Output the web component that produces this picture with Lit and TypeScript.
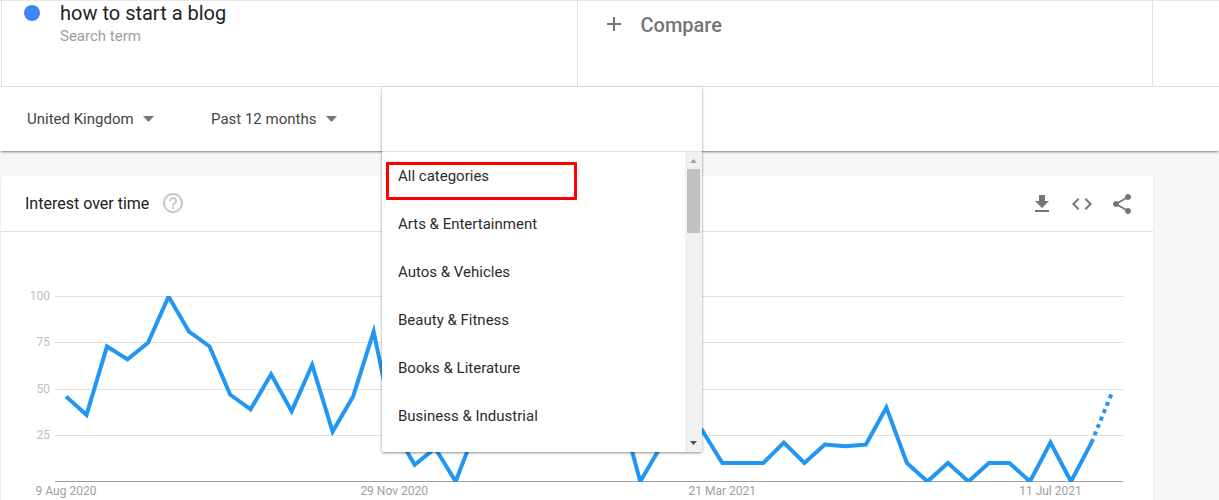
import { LitElement, html, svg, css } from "lit";
import { customElement, property } from "lit/decorators.js";

const INTEREST = [
  46, 36, 73, 66, 75, 100, 81, 73, 47, 39, 58, 38, 63, 27, 46, 81, 28, 9, 18, 0,
  29, 35, 22, 40, 30, 18, 34, 41, 0, 19, 34, 28, 10, 10, 10, 21, 10, 20, 19, 20,
  40, 10, 0, 10, 0, 10, 10, 0, 21, 0, 21, 48,
];

const WEEK_LABELS = [
  { week: 0, text: "9 Aug 2020" },
  { week: 16, text: "29 Nov 2020" },
  { week: 32, text: "21 Mar 2021" },
  { week: 48, text: "11 Jul 2021" },
];

const CATEGORIES = [
  "All categories",
  "Arts & Entertainment",
  "Autos & Vehicles",
  "Beauty & Fitness",
  "Books & Literature",
  "Business & Industrial",
];

const PLOT_WIDTH = 1068;
const PLOT_HEIGHT = 186;
const weekX = (week: number) => 11 + (week * 1046) / 51;
const valueY = (value: number) => PLOT_HEIGHT - 0.5 - value * 1.85;
const point = (week: number) => `${weekX(week)},${valueY(INTEREST[week])}`;

@customElement("trend-chart")
class TrendChart extends LitElement {
  static styles = css`
    :host {
      display: grid;
      grid-template-columns: 49px minmax(0, 1fr);
      column-gap: 5px;
      padding: 56px 30px 0 0;
    }
    .ticks {
      display: flex;
      flex-direction: column;
      justify-content: space-between;
      height: 155px;
      text-align: right;
      font-size: 12px;
      line-height: 16px;
      color: #bdbdbd;
    }
    .plot {
      padding-top: 8px;
    }
    .lines {
      display: block;
      width: 100%;
      height: 186px;
      overflow: hidden;
    }
    .grid {
      stroke: #e0e0e0;
      stroke-width: 1;
    }
    .base {
      stroke: #9e9e9e;
      stroke-width: 1;
    }
    .series {
      fill: none;
      stroke: #2196f3;
      stroke-width: 4;
    }
    .partial {
      stroke-dasharray: 4 4;
    }
    .grid,
    .base,
    .series {
      vector-effect: non-scaling-stroke;
    }
    .weeks {
      display: block;
      width: 100%;
      height: 18px;
      overflow: visible;
      font-size: 12px;
      fill: #9e9e9e;
    }
  `;

  render() {
    const last = INTEREST.length - 1;
    const complete = INTEREST.slice(0, last).map((_, week) => point(week)).join(" ");
    return html`
      <div class="ticks">
        <span>100</span><span>75</span><span>50</span><span>25</span>
      </div>
      <div class="plot">
        <svg class="lines" viewBox="0 0 ${PLOT_WIDTH} ${PLOT_HEIGHT}" preserveAspectRatio="none" role="img" aria-label="Interest over time">
          ${[0.5, 46.5, 93.5, 139.5].map(
            (y) => svg`<line class="grid" x1="0" x2=${PLOT_WIDTH} y1=${y} y2=${y}></line>`
          )}
          <line class="base" x1="0" x2=${PLOT_WIDTH} y1="185.5" y2="185.5"></line>
          <polyline class="series" points=${complete}></polyline>
          <polyline class="series partial" points="${point(last - 1)} ${point(last)}"></polyline>
        </svg>
        <svg class="weeks">
          ${WEEK_LABELS.map(
            (label) => svg`<text x="${(weekX(label.week) / PLOT_WIDTH) * 100}%" y="13" text-anchor="middle">${label.text}</text>`
          )}
        </svg>
      </div>
    `;
  }
}

@customElement("category-menu")
class CategoryMenu extends LitElement {
  @property() selected = "All categories";

  static styles = css`
    :host {
      display: block;
      width: 320px;
      background: #fff;
      border-radius: 2px;
      box-shadow: 0 1px 3px rgba(0, 0, 0, 0.45);
    }
    .search {
      display: block;
      box-sizing: border-box;
      width: 100%;
      height: 65px;
      padding: 0 16px;
      border: 0;
      border-bottom: 1px solid #e0e0e0;
      outline: 0;
      background: transparent;
      font: inherit;
    }
    .body {
      position: relative;
      display: flex;
      height: 300px;
      overflow: hidden;
    }
    .list {
      flex: 1;
      margin: 0;
      padding: 0;
      list-style: none;
    }
    .item {
      display: block;
      width: 100%;
      height: 48px;
      padding: 0 16px;
      border: 0;
      background: none;
      text-align: left;
      font: inherit;
      font-size: 15px;
      color: #2c2c2c;
    }
    .bar {
      display: flex;
      flex-direction: column;
      align-items: center;
      justify-content: space-between;
      width: 17px;
      background: #f1f1f1;
    }
    .upper {
      display: flex;
      flex-direction: column;
      align-items: center;
    }
    .arrow {
      display: block;
      width: 17px;
      height: 17px;
    }
    .thumb {
      width: 13px;
      height: 64px;
      background: #c1c1c1;
    }
    .highlight {
      position: absolute;
      top: 10px;
      left: 4px;
      box-sizing: border-box;
      width: 191px;
      height: 38px;
      border: 3px solid #f00;
      border-radius: 1px;
      pointer-events: none;
    }
  `;

  render() {
    return html`
      <input class="search" type="text" aria-label="Search categories" />
      <div class="body">
        <ul class="list">
          ${CATEGORIES.map(
            (name) => html`<li>
              <button class="item" type="button" aria-pressed=${name === this.selected} @click=${() => (this.selected = name)}>${name}</button>
            </li>`
          )}
        </ul>
        <div class="bar" aria-hidden="true">
          <div class="upper">
            <svg class="arrow" viewBox="0 0 17 17"><path d="M5 11h7L8.500 7z" fill="#a3a3a3"></path></svg>
            <div class="thumb"></div>
          </div>
          <svg class="arrow" viewBox="0 0 17 17"><path d="M5 6h7l-3.500 4z" fill="#505050"></path></svg>
        </div>
        <div class="highlight"></div>
      </div>
    `;
  }
}

@customElement("app-root")
class AppRoot extends LitElement {
  static styles = css`
    :host {
      display: flex;
      flex-direction: column;
      min-height: 100vh;
      background: #f6f6f6;
      font-family: Roboto, "Liberation Sans", sans-serif;
      color: #212121;
    }
    button {
      padding: 0;
      border: 0;
      background: none;
      font: inherit;
      color: inherit;
    }
    .terms {
      display: grid;
      grid-template-columns: 1fr 1fr 67px;
      box-sizing: border-box;
      height: 87px;
      padding-left: 1px;
      border-top: 1px solid #e8e8e8;
      border-bottom: 1px solid #e0e0e0;
      background: #fff;
    }
    .cell {
      border-left: 1px solid #e0e0e0;
    }
    .term {
      display: flex;
      align-items: flex-start;
      gap: 20px;
      padding-left: 22px;
    }
    .dot {
      width: 16px;
      height: 16px;
      margin-top: 4px;
      border-radius: 50%;
      background: #4285f4;
    }
    .name {
      margin: 0;
      font-size: 20px;
      font-weight: 400;
      line-height: 24px;
    }
    .kind {
      margin: 2px 0 0;
      font-size: 15px;
      line-height: 18px;
      color: #9e9e9e;
    }
    .compare {
      display: flex;
      align-items: center;
      gap: 15px;
      padding: 12px 0 0 24px;
      font-size: 20px;
      font-weight: 500;
      line-height: 24px;
      color: #757575;
    }
    .icon {
      display: block;
      width: 24px;
      height: 24px;
      fill: currentColor;
    }
    .filters {
      position: relative;
      z-index: 1;
      display: grid;
      grid-template-columns: 184px 184px 320px;
      height: 64px;
      padding-left: 14px;
      background: #fff;
      box-shadow: 0 2px 2px -1px rgba(0, 0, 0, 0.5);
    }
    .filter {
      display: flex;
      align-items: center;
      gap: 9px;
      padding-left: 13px;
    }
    .select {
      appearance: none;
      padding: 0;
      border: 0;
      background: none;
      font: inherit;
      font-size: 15px;
      line-height: 20px;
      color: #444;
    }
    .caret {
      width: 11px;
      height: 6px;
      fill: #757575;
    }
    .anchor {
      position: relative;
    }
    .menu {
      position: absolute;
      top: 0;
      left: 0;
    }
    .card {
      flex: 1;
      margin: 25px 66px 0 1px;
      border-radius: 2px 2px 0 0;
      background: #fff;
      box-shadow: 0 1px 2px rgba(0, 0, 0, 0.12);
    }
    .head {
      display: flex;
      align-items: center;
      justify-content: space-between;
      box-sizing: border-box;
      height: 56px;
      padding: 0 19px 0 24px;
      border-bottom: 1px solid #e0e0e0;
    }
    .title {
      display: flex;
      align-items: flex-start;
      gap: 12px;
    }
    .heading {
      margin: 0;
      font-size: 16px;
      font-weight: 400;
      line-height: 24px;
    }
    .help {
      margin-top: -1px;
      color: #c6c6c6;
    }
    .tools {
      display: flex;
      gap: 16px;
      color: #757575;
    }
  `;

  private filter(label: string, value: string) {
    return html`<label class="filter">
      <select class="select" aria-label=${label}><option>${value}</option></select>
      <svg class="caret" viewBox="0 0 11 6"><path d="M0 0h11L5.500 6z"></path></svg>
    </label>`;
  }

  private tool(label: string, path: string) {
    return html`<button type="button" aria-label=${label}>
      <svg class="icon" viewBox="0 0 24 24"><path d=${path}></path></svg>
    </button>`;
  }

  render() {
    return html`
      <section class="terms">
        <div class="cell term">
          <span class="dot"></span>
          <div>
            <h1 class="name">how to start a blog</h1>
            <p class="kind">Search term</p>
          </div>
        </div>
        <div class="cell">
          <button class="compare" type="button">
            <svg class="icon" viewBox="0 0 24 24"><path d="M19 12h-6v6h-2v-6H5v-2h6V4h2v6h6z"></path></svg>
            Compare
          </button>
        </div>
        <div class="cell"></div>
      </section>
      <section class="filters">
        ${this.filter("Region", "United Kingdom")}
        ${this.filter("Period", "Past 12 months")}
        <div class="anchor"><category-menu class="menu"></category-menu></div>
      </section>
      <section class="card">
        <header class="head">
          <div class="title">
            <h2 class="heading">Interest over time</h2>
            <button class="help" type="button" aria-label="Help">
              <svg class="icon" viewBox="0 0 24 24"><path d="M11 18h2v-2h-2v2zm1-16C6.480 2 2 6.480 2 12s4.480 10 10 10 10-4.480 10-10S17.520 2 12 2zm0 18c-4.410 0-8-3.590-8-8s3.590-8 8-8 8 3.590 8 8-3.590 8-8 8zm0-14c-2.210 0-4 1.790-4 4h2c0-1.100.9-2 2-2s2 .9 2 2c0 2-3 1.750-3 5h2c0-2.250 3-2.500 3-5 0-2.210-1.790-4-4-4z"></path></svg>
            </button>
          </div>
          <div class="tools">
            ${this.tool("Download", "M19 9h-4V3H9v6H5l7 7 7-7zM5 18v2h14v-2H5z")}
            ${this.tool("Embed", "M9.400 16.600L4.800 12l4.600-4.600L8 6l-6 6 6 6 1.400-1.400zm5.200 0l4.600-4.600-4.600-4.600L16 6l6 6-6 6-1.400-1.400z")}
            ${this.tool("Share", "M18 16.080c-.76 0-1.440.3-1.960.77L8.910 12.700c.05-.23.09-.46.09-.7s-.04-.47-.09-.7l7.050-4.110c.54.5 1.250.81 2.040.81 1.660 0 3-1.340 3-3s-1.340-3-3-3-3 1.340-3 3c0 .24.04.47.09.7L8.040 9.810C7.500 9.310 6.790 9 6 9c-1.660 0-3 1.340-3 3s1.340 3 3 3c.79 0 1.500-.31 2.040-.81l7.120 4.160c-.05.21-.08.43-.08.65 0 1.610 1.310 2.920 2.920 2.920s2.920-1.310 2.920-2.920-1.310-2.920-2.920-2.920z")}
          </div>
        </header>
        <trend-chart></trend-chart>
      </section>
    `;
  }
}
